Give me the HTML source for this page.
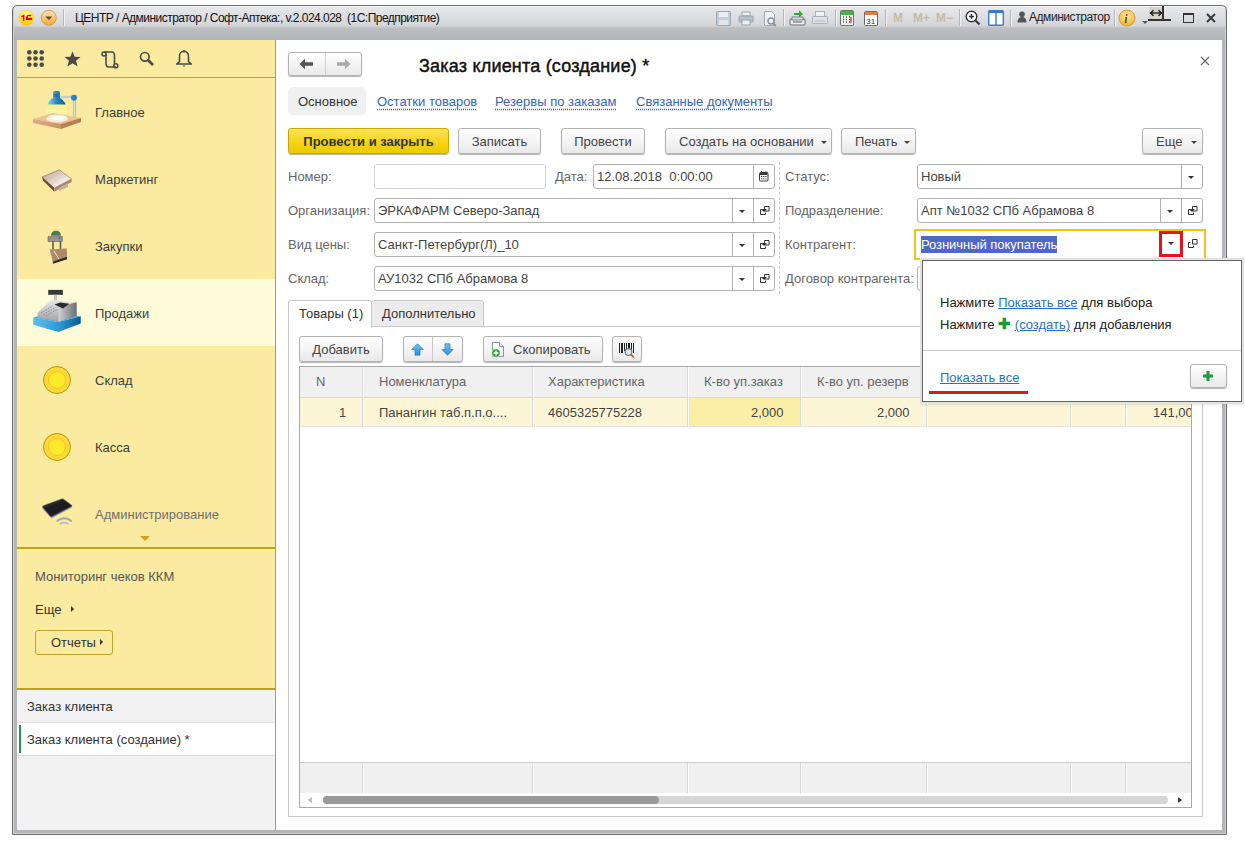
<!DOCTYPE html>
<html><head><meta charset="utf-8">
<style>
*{box-sizing:border-box;margin:0;padding:0}
html,body{width:1245px;height:843px;overflow:hidden;background:#fff;-webkit-font-smoothing:antialiased;font-family:"Liberation Sans",sans-serif;font-size:13px;color:#3d3d3d}
.a{position:absolute}
.t{position:absolute;white-space:nowrap;line-height:15px}
#win{position:absolute;left:12px;top:5px;width:1215px;height:830px;border:1px solid #6f6f6f;border-radius:5px 5px 0 0;box-shadow:inset 1px 0 0 #cfd0d2,inset -1px 0 0 #cfd0d2,inset 0 -1px 0 #cfd0d2,inset 0 1px 0 #f4f4f6;background:linear-gradient(#e8e9eb,#d4d5d8 20px,#c6c7ca 21px,#bdbec1 22px,#b4b5b8 34px)}
#left{position:absolute;left:17px;top:40px;width:259px;height:790px;background:#fbeba0}
#form{position:absolute;left:276px;top:40px;width:946px;height:790px;background:#fff}
.sep{position:absolute;top:9px;width:1px;height:17px;background:#b5b6b9;box-shadow:1px 0 0 #f2f2f2}
.btn{position:absolute;border:1px solid #b3b3b3;border-radius:3px;background:linear-gradient(#fff,#f4f4f4 50%,#e9e9e9);box-shadow:0 1px 1px rgba(0,0,0,.3);text-align:center;line-height:23px;color:#444;white-space:nowrap}
.inp{position:absolute;border:1px solid #b0b0b0;border-radius:3px;background:#fff;height:25px;line-height:23px;padding-left:3px;color:#444;white-space:nowrap}
.dd{position:absolute;top:0;bottom:0;width:20px;border-left:1px solid #b0b0b0}
.dd:after{content:"";position:absolute;left:7px;top:10px;border-left:3px solid transparent;border-right:3px solid transparent;border-top:3px solid #333}
.op{position:absolute;width:18px;height:25px}
.lnk{color:#3366bb;text-decoration:underline dotted #3366bb;text-underline-offset:3px}
.lab{color:#666}
.navt{position:absolute;left:78px;color:#333;font-size:13px}

.ar{width:21px}
.ar:after{content:"";position:absolute;left:6px;top:11px;border-left:3px solid transparent;border-right:3px solid transparent;border-top:3px solid #333}
.op2:after{content:"";position:absolute;left:8px;top:7px;width:6px;height:6px;border:1px solid #333}
.op2:before{content:"";position:absolute;left:5px;top:10px;width:5px;height:5px;border-left:1px solid #333;border-bottom:1px solid #333}
.dd:not(.ar):not(.op2):after{}
</style></head><body>
<div id="win"></div>
<!-- title bar -->
<svg class="a" style="left:17px;top:9px" width="19" height="18" viewBox="0 0 19 18">
 <defs><radialGradient id="g1c" cx="50%" cy="30%" r="65%"><stop offset="0" stop-color="#fffac0"/><stop offset=".6" stop-color="#ffe830"/><stop offset="1" stop-color="#f5c800"/></radialGradient></defs>
 <circle cx="9.3" cy="8.8" r="7.6" fill="url(#g1c)" stroke="#f0d060" stroke-width=".6"/>
 <path d="M4.2 7.2l2-1.4h1.2v6.2H5.8V7.8l-1.2.6z" fill="#e80000"/>
 <path d="M9 9.5c0-2.6 1.3-3.7 3.3-3.7 1.2 0 2 .5 2.3 1.2l-1.3.6c-.2-.3-.5-.5-1-.5-.9 0-1.4.6-1.5 2H15.2v1.8H9z" fill="#e80000"/>
</svg>
<svg class="a" style="left:39px;top:9px" width="19" height="18" viewBox="0 0 19 18">
 <defs><linearGradient id="gor" x1="0" y1="0" x2="0" y2="1"><stop offset="0" stop-color="#fde6b8"/><stop offset="1" stop-color="#f7a830"/></linearGradient></defs>
 <circle cx="9.8" cy="8.8" r="7.5" fill="url(#gor)" stroke="#c89a40" stroke-width=".9"/>
 <path d="M6.3 7.5h7l-3.5 3.6z" fill="#5a4828"/>
</svg>
<div class="sep" style="left:63px"></div>
<div class="t" style="left:75px;top:11px;font-size:12px;color:#111;letter-spacing:-0.53px;white-space:pre">ЦЕНТР / Администратор / Софт-Аптека:, v.2.024.028  (1С:Предприятие)</div>


<!-- title toolbar right -->
<svg class="a" style="left:716px;top:11px" width="15" height="15" viewBox="0 0 15 15"><rect x=".5" y=".5" width="14" height="14" rx="1" fill="#c4cdd6" stroke="#9aa6b2"/><rect x="3" y="1" width="9" height="5" fill="#e8eef3"/><rect x="3" y="9" width="9" height="5" fill="#dfe5ea"/></svg>
<svg class="a" style="left:738px;top:11px" width="16" height="15" viewBox="0 0 16 15"><rect x="4" y="1" width="8" height="4" fill="#eceff2" stroke="#9aa4ae"/><rect x="1" y="5" width="14" height="6" rx="1" fill="#b9c2cb" stroke="#98a2ac"/><rect x="4" y="9" width="8" height="5" fill="#eceff2" stroke="#9aa4ae"/></svg>
<svg class="a" style="left:763px;top:11px" width="15" height="16" viewBox="0 0 15 16"><path d="M1.5 .5h7l3 3v11h-10z" fill="#eef1f4" stroke="#9ea8b2"/><circle cx="8" cy="10" r="3" fill="none" stroke="#8a96a2" stroke-width="1.5"/><path d="M10 12l3 3" stroke="#8a96a2" stroke-width="1.8"/></svg>
<div class="sep" style="left:783px"></div>
<svg class="a" style="left:789px;top:9px" width="17" height="17" viewBox="0 0 17 17"><path d="M5 4h5V1.5L14 5l-4 3.5V6H5z" fill="#2bb02b"/><rect x="1" y="10" width="15" height="6" rx="1" fill="#eee" stroke="#6a6a6a"/><rect x="3" y="8" width="11" height="3" fill="#ddd" stroke="#6a6a6a" stroke-width=".8"/><path d="M4 13h9" stroke="#555"/></svg>
<svg class="a" style="left:812px;top:11px" width="16" height="15" viewBox="0 0 16 15"><rect x="3.5" y=".5" width="9" height="5" fill="#eef0f2" stroke="#a8b0b8"/><rect x=".5" y="5.5" width="15" height="7" rx="1" fill="#dde1e5" stroke="#a8b0b8"/><path d="M3 10h10" stroke="#b0b8c0"/></svg>
<div class="sep" style="left:835px"></div>
<svg class="a" style="left:840px;top:10px" width="14" height="16" viewBox="0 0 14 16"><rect x=".5" y=".5" width="13" height="15" rx="1" fill="#eef2ee" stroke="#6a7a6a"/><rect x="1" y="1" width="12" height="4" fill="#4ab04a"/><path d="M3 7h1M6 7h1M9 7h1M3 9.5h1M6 9.5h1M9 9.5h1M3 12h1M6 12h1M9 12h1" stroke="#555" stroke-width="1.3"/><path d="M11 7v6" stroke="#d03030" stroke-width="1.3"/></svg>
<svg class="a" style="left:864px;top:10px" width="14" height="16" viewBox="0 0 14 16"><rect x=".5" y="1.5" width="13" height="14" rx="1" fill="#fff" stroke="#6a6a6a"/><rect x="1" y="2" width="12" height="3" fill="#e08040"/><text x="2.3" y="13.5" font-family="Liberation Sans" font-size="8" fill="#333">31</text></svg>
<div class="sep" style="left:885px"></div>
<div class="t" style="left:893px;top:11px;font-size:12px;font-weight:bold;color:#c9b9a6">M</div>
<div class="t" style="left:913px;top:11px;font-size:12px;font-weight:bold;color:#c9b9a6">M+</div>
<div class="t" style="left:936px;top:11px;font-size:12px;font-weight:bold;color:#c9b9a6">M−</div>
<div class="sep" style="left:959px"></div>
<svg class="a" style="left:965px;top:10px" width="16" height="16" viewBox="0 0 16 16"><circle cx="6.5" cy="6.5" r="5.3" fill="#fff" stroke="#333" stroke-width="1.4"/><path d="M6.5 4v5M4 6.5h5" stroke="#333" stroke-width="1.4"/><path d="M10.5 10.5l4 4" stroke="#333" stroke-width="2"/></svg>
<svg class="a" style="left:988px;top:10px" width="16" height="16" viewBox="0 0 16 16"><rect x=".7" y=".7" width="14.6" height="14.6" rx="1" fill="#fff" stroke="#3a7ac8" stroke-width="1.4"/><rect x="1" y="1" width="14" height="2" fill="#3a7ac8"/><path d="M8 2v13" stroke="#3a7ac8" stroke-width="1.4"/></svg>
<div class="sep" style="left:1010px"></div>
<svg class="a" style="left:1017px;top:11px" width="10" height="12" viewBox="0 0 10 12"><circle cx="5" cy="3.2" r="2.8" fill="#555"/><path d="M0.5 11.5c0-4 2-5.5 4.5-5.5s4.5 1.5 4.5 5.5z" fill="#555"/></svg>
<div class="t" style="left:1029px;top:10px;font-size:12px;color:#222;letter-spacing:-0.45px">Администратор</div>
<div class="sep" style="left:1114px"></div>
<svg class="a" style="left:1118px;top:9px" width="18" height="18" viewBox="0 0 18 18"><defs><radialGradient id="ginf" cx="50%" cy="35%" r="60%"><stop offset="0" stop-color="#fde7a8"/><stop offset="1" stop-color="#f2b838"/></radialGradient></defs><circle cx="9" cy="9" r="8" fill="url(#ginf)" stroke="#d8a030"/><text x="6.3" y="14" font-family="Liberation Serif" font-style="italic" font-weight="bold" font-size="12" fill="#6a5020">i</text></svg>
<div class="a" style="left:1149px;top:7px;width:14px;height:12px;background:#d6d2ca"></div>
<svg class="a" style="left:1149px;top:9px" width="14" height="8" viewBox="0 0 14 8"><path d="M2 4h10" stroke="#111" stroke-width="1.3"/><path d="M4.5 1.2L1.5 4l3 2.8M9.5 1.2l3 2.8-3 2.8" fill="none" stroke="#111" stroke-width="1.3"/></svg>
<div class="a" style="left:1162px;top:6px;width:2px;height:15px;background:#333"></div>
<div class="a" style="left:1148px;top:19px;width:23px;height:2px;background:#333"></div>
<div class="a" style="left:1142px;top:21px;border-left:3px solid transparent;border-right:3px solid transparent;border-top:3px solid #555"></div>
<div class="a" style="left:1183px;top:13px;width:11px;height:10px;border:1px solid #333;border-top-width:2px"></div>
<svg class="a" style="left:1206px;top:13px" width="10" height="10" viewBox="0 0 10 10"><path d="M1 1l8 8M9 1l-8 8" stroke="#333" stroke-width="1.8"/></svg>
<div id="left"></div>
<!-- left panel -->
<svg class="a" style="left:27px;top:50px" width="18" height="18" viewBox="0 0 18 18" fill="#4a4a4a">
 <circle cx="2.3" cy="2.3" r="2.3"/><circle cx="8.5" cy="2.3" r="2.3"/><circle cx="14.7" cy="2.3" r="2.3"/>
 <circle cx="2.3" cy="8.5" r="2.3"/><circle cx="8.5" cy="8.5" r="2.3"/><circle cx="14.7" cy="8.5" r="2.3"/>
 <circle cx="2.3" cy="14.7" r="2.3"/><circle cx="8.5" cy="14.7" r="2.3"/><circle cx="14.7" cy="14.7" r="2.3"/>
</svg>
<svg class="a" style="left:64px;top:51px" width="17" height="16" viewBox="0 0 17 16"><path d="M8.5 0.5l2.2 5.3 5.8 .3-4.5 3.7 1.6 5.7-5.1-3.3-5.1 3.3 1.6-5.7L.5 6.1l5.8-.3z" fill="#4a4a4a"/></svg>
<svg class="a" style="left:101px;top:51px" width="18" height="18" viewBox="0 0 18 18" fill="none" stroke="#4a4a4a" stroke-width="1.6">
 <circle cx="3" cy="3" r="2"/><path d="M3 1h8c2 0 2.5 2 2.5 4v8"/><path d="M5 3v9c0 2 .5 4 2.5 4h7.5"/><circle cx="14.8" cy="14.8" r="2"/>
</svg>
<svg class="a" style="left:139px;top:51px" width="16" height="16" viewBox="0 0 16 16"><circle cx="5.8" cy="5.8" r="4.3" fill="none" stroke="#4a4a4a" stroke-width="1.7"/><path d="M9 9l5 5" stroke="#4a4a4a" stroke-width="2.6"/></svg>
<svg class="a" style="left:176px;top:50px" width="16" height="18" viewBox="0 0 16 18"><path d="M8 1.2c-2.8 0-4.5 2.2-4.5 5v5.3L1 14h14l-2.5-2.5V6.2c0-2.8-1.7-5-4.5-5z" fill="none" stroke="#4a4a4a" stroke-width="1.6"/><circle cx="8" cy="1.3" r="1.2" fill="#4a4a4a"/><path d="M6.5 15.5h3l-1.5 1.5z" fill="#4a4a4a"/></svg>
<div class="a" style="left:17px;top:77px;width:258px;height:1px;background:#bda21c"></div>
<div class="a" style="left:17px;top:279px;width:258px;height:67px;background:#fefbd8"></div>
<div class="t" style="left:95px;top:105px">Главное</div>
<div class="t" style="left:95px;top:172px">Маркетинг</div>
<div class="t" style="left:95px;top:239px">Закупки</div>
<div class="t" style="left:95px;top:306px">Продажи</div>
<div class="t" style="left:95px;top:373px">Склад</div>
<div class="t" style="left:95px;top:440px">Касса</div>
<div class="t" style="left:95px;top:507px;color:#707070">Администрирование</div>
<div class="a" style="left:140px;top:536px;border-left:5px solid transparent;border-right:5px solid transparent;border-top:5px solid #d4a020"></div>
<!-- icons -->
<svg class="a" style="left:25px;top:85px" width="65" height="55" viewBox="0 0 65 55">
 <defs>
  <linearGradient id="lshade" x1="0" y1="0" x2="1" y2="0"><stop offset="0" stop-color="#9ad4f4"/><stop offset=".5" stop-color="#2a86c0"/><stop offset="1" stop-color="#1a5a90"/></linearGradient>
  <linearGradient id="lcone" x1="0" y1="0" x2="0" y2="1"><stop offset="0" stop-color="#fff27a" stop-opacity=".95"/><stop offset="1" stop-color="#fff8c0" stop-opacity=".4"/></linearGradient>
  <linearGradient id="lfront" x1="0" y1="0" x2="1" y2="0"><stop offset="0" stop-color="#e0a888"/><stop offset="1" stop-color="#c89468"/></linearGradient>
 </defs>
 <path d="M23 19.6L20 29h23l-3-9.4z" fill="url(#lcone)"/>
 <path d="M8 34L28 28L56 33L36 39z" fill="#e6c494"/>
 <path d="M8 34L36 39V44L8 38z" fill="url(#lfront)"/>
 <path d="M36 39L56 33V37L36 44z" fill="#b48058"/>
 <ellipse cx="32" cy="33.5" rx="11" ry="4" fill="#fff8d8" opacity=".8"/>
 <path d="M23 34L29 30.7L42.4 32L35.6 35.6z" fill="#fff"/>
 <path d="M35 12h14" stroke="#c8ccd2" stroke-width="2.4"/>
 <path d="M49.6 13v18.5" stroke="#a8acb2" stroke-width="2.6"/>
 <path d="M49.6 13v18.5" stroke="#e8eaee" stroke-width="1"/>
 <circle cx="49" cy="12.7" r="3" fill="#2a80c0"/>
 <path d="M28 13V7.5c0-1 1-1.5 3.5-1.5s3.5 .5 3.5 1.5V13c2 1 5 4 5.5 6.6H22.5C23 17 26 14 28 13z" fill="url(#lshade)"/>
 <path d="M30 9v3M32 9v3" stroke="#1a4a78" stroke-width=".8"/>
</svg>
<svg class="a" style="left:30px;top:155px" width="55" height="45" viewBox="0 0 55 45">
 <defs><linearGradient id="mtop" x1="0" y1="0" x2="1" y2="1"><stop offset="0" stop-color="#b89a88"/><stop offset=".7" stop-color="#f4ece8"/><stop offset="1" stop-color="#c8b0a0"/></linearGradient></defs>
 <path d="M12 22l17.4-7.2L41.6 24L24.3 33.1z" fill="url(#mtop)" stroke="#8a6a58" stroke-width=".6"/>
 <path d="M12 22L24.3 33.1V36.8L13 25.5z" fill="#6a4a38"/>
 <path d="M24.3 33.1L41.6 24V27L24.3 36.8z" fill="#a88870"/>
 <path d="M29 33l9-5v4l-9 4z" fill="#c8b098"/>
</svg>
<svg class="a" style="left:35px;top:220px" width="45" height="55" viewBox="0 0 45 55">
 <path d="M16 15.7c0-3 2-5 5-5s5 2 5 5z" fill="#6a6a62"/>
 <rect x="17.5" y="12.5" width="7" height="2" fill="#2a8a5a"/>
 <path d="M13 16.6h14.4v4.9H13z" fill="#9a968e" stroke="#5a5650" stroke-width=".6"/>
 <path d="M23 18.5l1.5-1.5 1.5 1.5z" fill="#3050c0"/>
 <path d="M18 21.5v8M25.5 21.5v8" stroke="#5a5a5a" stroke-width="1.6"/>
 <path d="M14.7 29.5l17 -1 .3 8.5-14 5z" fill="#b08a68"/>
 <path d="M17.7 41.7l14.3-5v2.5l-14 4.5z" fill="#2a2420"/>
 <path d="M19 31l5 8" stroke="#f0e8e0" stroke-width="1"/>
</svg>
<svg class="a" style="left:25px;top:285px" width="65" height="55" viewBox="0 0 65 55">
 <defs>
  <linearGradient id="dr" x1="0" y1="0" x2="1" y2="0"><stop offset="0" stop-color="#5cc0ee"/><stop offset=".55" stop-color="#2a98d8"/><stop offset="1" stop-color="#0a5a90"/></linearGradient>
  <linearGradient id="kb" x1="0" y1="0" x2="0" y2="1"><stop offset="0" stop-color="#e8e8ea"/><stop offset="1" stop-color="#a0a2a6"/></linearGradient>
  <linearGradient id="side" x1="0" y1="0" x2="1" y2="0"><stop offset="0" stop-color="#d0d2d4"/><stop offset="1" stop-color="#6a6c70"/></linearGradient>
 </defs>
 <path d="M8.2 32.6V39.8L33.3 47L55.8 38.5V31.3L33 37z" fill="url(#dr)"/>
 <path d="M8.2 32.6L30 27L55.8 31.3L33 37z" fill="#3aa8e0"/>
 <path d="M12.4 28L26 15L51.6 17.3V30.7L33.3 36.6L12.4 32.6z" fill="url(#kb)"/>
 <path d="M34 22L51.6 17.3V30.7L33.3 36.6z" fill="url(#side)"/>
 <path d="M29.4 19.5L35 17.5L44.4 18.8L38 23.5z" fill="#2a2a2a"/>
 <path d="M16 28l12-7M18.5 29.5l12-7M21 31l12-7" stroke="#8a8c90" stroke-width="1" stroke-dasharray="1.5 1.2"/>
 <rect x="23.2" y="4.9" width="14.7" height="4.9" fill="#3a3a3a"/>
 <rect x="29" y="9.8" width="3" height="5.5" fill="#c8c8c8"/>
 <circle cx="19.5" cy="38" r=".8" fill="#c0a0a0"/>
</svg>
<svg class="a" style="left:35px;top:360px" width="45" height="40" viewBox="0 0 45 40"><circle cx="22" cy="20" r="13.5" fill="#fdd838" stroke="#b89a10" stroke-width="1"/><circle cx="22" cy="20" r="8.5" fill="#ffea2a" stroke="#ecc828" stroke-width="1"/></svg>
<svg class="a" style="left:35px;top:427px" width="45" height="40" viewBox="0 0 45 40"><circle cx="22" cy="20" r="13.5" fill="#fdd838" stroke="#b89a10" stroke-width="1"/><circle cx="22" cy="20" r="8.5" fill="#ffea2a" stroke="#ecc828" stroke-width="1"/></svg>
<svg class="a" style="left:30px;top:490px" width="55" height="45" viewBox="0 0 55 45">
 <path d="M13 19.5L21.5 28.5L42 17.5L41.5 15.8L21.1 26.3L12.6 17.6z" fill="#a8a8b0"/>
 <path d="M12.8 17.3Q12.3 16.2 13.5 15.7L31.8 9Q32.8 8.7 33.5 9.3L41.6 15.2Q42.3 16 41.2 16.6L22 26.6Q21 27 20.3 26.3z" fill="#1c1c22" stroke="#55555c" stroke-width=".7"/>
 <path d="M15 17l17-6" stroke="#3a3a44" stroke-width=".6"/>
 <path d="M27.5 30.8q6.8-5.2 13.6 0" stroke="#9aa2bc" stroke-width="2" fill="none" stroke-linecap="round"/>
 <path d="M30.6 33.8q3.6-2.6 7.2 0" stroke="#b4b8c4" stroke-width="1.7" fill="none" stroke-linecap="round"/>
</svg>
<div class="a" style="left:17px;top:547px;width:258px;height:2px;background:#bda21c"></div>
<div class="t" style="left:35px;top:569px;color:#555">Мониторинг чеков ККМ</div>
<div class="t" style="left:35px;top:602px;color:#333">Еще</div>
<div class="a" style="left:71px;top:606px;border-top:3px solid transparent;border-bottom:3px solid transparent;border-left:3px solid #333"></div>
<div class="a" style="left:35px;top:630px;width:78px;height:25px;border:1px solid #bfa425;border-radius:3px"></div>
<div class="t" style="left:51px;top:635px;color:#333">Отчеты</div>
<div class="a" style="left:100px;top:639px;border-top:3px solid transparent;border-bottom:3px solid transparent;border-left:3px solid #333"></div>
<div class="a" style="left:17px;top:688px;width:258px;height:142px;background:#f2f2f2;border-top:2px solid #bda21c"></div>
<div class="t" style="left:27px;top:699px;color:#333">Заказ клиента</div>
<div class="a" style="left:17px;top:722px;width:258px;height:34px;background:#fff;border-top:1px solid #e0e0e0;border-bottom:1px solid #dcdcdc"></div>
<div class="a" style="left:19px;top:725px;width:2px;height:28px;background:#1e9a50"></div>
<div class="t" style="left:27px;top:732px;color:#333">Заказ клиента (создание) *</div>
<div class="a" style="left:275px;top:40px;width:1px;height:790px;background:#bda21c"></div>

<div id="form"></div>
<!-- form header -->
<div class="btn" style="left:288px;top:52px;width:74px;height:24px;border-radius:3px"></div>
<div class="a" style="left:325px;top:53px;width:1px;height:22px;background:#d0d0d0"></div>
<svg class="a" style="left:299px;top:58px" width="16" height="12" viewBox="0 0 16 12"><path d="M0.5 6L6 0.8v3.4h8v3.6H6v3.4z" fill="#555"/></svg>
<svg class="a" style="left:335px;top:58px" width="16" height="12" viewBox="0 0 16 12"><path d="M15.5 6L10 0.8v3.4H2v3.6h8v3.4z" fill="#aaa"/></svg>
<div class="t" style="left:419px;top:56px;font-size:18px;line-height:20px;color:#111;letter-spacing:.2px;-webkit-text-stroke:.45px #111">Заказ клиента (создание) *</div>
<svg class="a" style="left:1200px;top:56px" width="10" height="10" viewBox="0 0 10 10"><path d="M1 1l8 8M9 1l-8 8" stroke="#666" stroke-width="1.2"/></svg>
<div class="a" style="left:288px;top:87px;width:78px;height:28px;background:#f0f0f0;border-radius:5px"></div>
<div class="t" style="left:298px;top:94px;color:#333">Основное</div>
<div class="t lnk" style="left:377px;top:94px">Остатки товаров</div>
<div class="t lnk" style="left:495px;top:94px">Резервы по заказам</div>
<div class="t lnk" style="left:636px;top:94px">Связанные документы</div>
<!-- command bar -->
<div class="btn" style="left:288px;top:128px;width:161px;height:26px;background:linear-gradient(#fbe35a,#f5d311 60%,#eccb00);border-color:#c9a800;font-weight:bold;color:#333;line-height:26px">Провести и закрыть</div>
<div class="btn" style="left:458px;top:128px;width:83px;height:26px;line-height:26px">Записать</div>
<div class="btn" style="left:561px;top:128px;width:84px;height:26px;line-height:26px">Провести</div>
<div class="btn" style="left:665px;top:128px;width:167px;height:26px;line-height:26px;text-align:left;padding-left:13px">Создать на основании</div>
<div class="btn" style="left:841px;top:128px;width:75px;height:26px;line-height:26px;text-align:left;padding-left:13px">Печать</div>
<div class="btn" style="left:1142px;top:128px;width:61px;height:26px;line-height:26px;text-align:left;padding-left:13px">Еще</div>
<div class="a" style="left:821px;top:141px;border-left:3px solid transparent;border-right:3px solid transparent;border-top:3px solid #444"></div>
<div class="a" style="left:904px;top:141px;border-left:3px solid transparent;border-right:3px solid transparent;border-top:3px solid #444"></div>
<div class="a" style="left:1191px;top:141px;border-left:3px solid transparent;border-right:3px solid transparent;border-top:3px solid #444"></div>
<!-- fields -->
<div class="t lab" style="left:288px;top:169px">Номер:</div>
<div class="inp" style="left:374px;top:164px;width:172px;border-color:#d4d4d4"></div>
<div class="t lab" style="left:555px;top:169px">Дата:</div>
<div class="inp" style="left:593px;top:164px;width:182px;height:25px;line-height:23px"><span style="white-space:pre">12.08.2018  0:00:00</span><div class="dd" style="right:0;width:21px"></div></div>
<svg class="a" style="left:759px;top:170px" width="11" height="12" viewBox="0 0 11 12"><rect x=".5" y="2.5" width="8.5" height="8.5" rx="1" fill="#fff" stroke="#3a3a3a" stroke-width="1"/><rect x="1" y="2.5" width="7.5" height="2.5" fill="#3a3a3a"/><path d="M2.5 1v2M7 1v2" stroke="#3a3a3a" stroke-width="1"/><path d="M2 6.5h1.3M4.1 6.5h1.3M6.2 6.5h1.3M2 8.8h1.3M4.1 8.8h1.3M6.2 8.8h1.3" stroke="#3a3a3a" stroke-width="1"/></svg>
<div class="t lab" style="left:288px;top:203px">Организация:</div>
<div class="inp" style="left:374px;top:198px;width:401px">ЭРКАФАРМ Северо-Запад<div class="dd ar" style="right:21px"></div><div class="dd" style="right:0;width:21px"><svg style="position:absolute;left:5px;top:7px" width="11" height="11" viewBox="0 0 11 11"><path d="M5.5 .5h4.5v4.5h-4.5z" fill="none" stroke="#333" stroke-width="1"/><path d="M3.5 3.5h-2v5h5v-2" fill="none" stroke="#333" stroke-width="1"/></svg></div></div>
<div class="t lab" style="left:288px;top:237px">Вид цены:</div>
<div class="inp" style="left:374px;top:232px;width:401px">Санкт-Петербург(Л)_10<div class="dd ar" style="right:21px"></div><div class="dd" style="right:0;width:21px"><svg style="position:absolute;left:5px;top:7px" width="11" height="11" viewBox="0 0 11 11"><path d="M5.5 .5h4.5v4.5h-4.5z" fill="none" stroke="#333" stroke-width="1"/><path d="M3.5 3.5h-2v5h5v-2" fill="none" stroke="#333" stroke-width="1"/></svg></div></div>
<div class="t lab" style="left:288px;top:271px">Склад:</div>
<div class="inp" style="left:374px;top:266px;width:401px">АУ1032 СПб Абрамова 8<div class="dd ar" style="right:21px"></div><div class="dd" style="right:0;width:21px"><svg style="position:absolute;left:5px;top:7px" width="11" height="11" viewBox="0 0 11 11"><path d="M5.5 .5h4.5v4.5h-4.5z" fill="none" stroke="#333" stroke-width="1"/><path d="M3.5 3.5h-2v5h5v-2" fill="none" stroke="#333" stroke-width="1"/></svg></div></div>
<div class="a" style="left:779px;top:162px;width:0;height:132px;border-left:1px dashed #d0d0d0"></div>
<div class="t lab" style="left:785px;top:169px">Статус:</div>
<div class="inp" style="left:917px;top:164px;width:286px">Новый<div class="dd ar" style="right:0;width:21px"></div></div>
<div class="t lab" style="left:785px;top:203px">Подразделение:</div>
<div class="inp" style="left:917px;top:198px;width:286px">Апт №1032 СПб Абрамова 8<div class="dd ar" style="right:21px"></div><div class="dd" style="right:0;width:21px"><svg style="position:absolute;left:5px;top:7px" width="11" height="11" viewBox="0 0 11 11"><path d="M5.5 .5h4.5v4.5h-4.5z" fill="none" stroke="#333" stroke-width="1"/><path d="M3.5 3.5h-2v5h5v-2" fill="none" stroke="#333" stroke-width="1"/></svg></div></div>
<div class="t lab" style="left:785px;top:237px">Контрагент:</div>
<div class="a" style="left:914px;top:229px;width:292px;height:31px;border:2px solid #f6c21a"></div>
<div class="t" style="left:921px;top:236px;color:#fff;background:#4f68c2;line-height:16px;padding-top:1px;letter-spacing:-0.05px">Розничный покупатель</div>
<div class="a" style="left:1159px;top:231px;width:24px;height:26px;border:3px solid #e2141e"></div>
<div class="a" style="left:1168px;top:242px;border-left:3px solid transparent;border-right:3px solid transparent;border-top:3px solid #333"></div>
<svg class="a" style="left:1187px;top:239px" width="11" height="11" viewBox="0 0 11 11"><path d="M5.5 .5h4.5v4.5h-4.5z" fill="none" stroke="#333" stroke-width="1"/><path d="M3.5 3.5h-2v5h5v-2" fill="none" stroke="#333" stroke-width="1"/></svg>
<div class="t lab" style="left:785px;top:271px">Договор контрагента:</div>
<div class="inp" style="left:917px;top:266px;width:286px"></div>
<!-- tabs -->
<div class="a" style="left:288px;top:326px;width:915px;height:491px;border:1px solid #c8c8c8"></div>
<div class="a" style="left:371px;top:300px;width:113px;height:27px;background:#ececec;border:1px solid #c8c8c8;border-radius:3px 3px 0 0"></div>
<div class="a" style="left:288px;top:300px;width:84px;height:28px;background:#fff;border:1px solid #c8c8c8;border-bottom:none;border-radius:3px 3px 0 0"></div>
<div class="t" style="left:299px;top:306px;color:#333">Товары (1)</div>
<div class="t" style="left:382px;top:306px;color:#333">Дополнительно</div>
<!-- table toolbar -->
<div class="btn" style="left:299px;top:336px;width:84px;height:26px;line-height:25px">Добавить</div>
<div class="btn" style="left:403px;top:336px;width:60px;height:26px"></div>
<div class="a" style="left:432px;top:337px;width:1px;height:24px;background:#c8c8c8"></div>
<svg class="a" style="left:411px;top:343px" width="13" height="13" viewBox="0 0 13 13"><defs><linearGradient id="arg" x1="0" y1="0" x2="0" y2="1"><stop offset="0" stop-color="#6cc4f4"/><stop offset="1" stop-color="#2a90d8"/></linearGradient></defs><path d="M6.5 .8L12.2 6.5H9v5.7H4V6.5H.8z" fill="url(#arg)" stroke="#2a7cc0" stroke-width=".7" stroke-linejoin="round"/></svg>
<svg class="a" style="left:441px;top:343px" width="13" height="13" viewBox="0 0 13 13"><path d="M6.5 12.2L12.2 6.5H9V.8H4v5.7H.8z" fill="url(#arg)" stroke="#2a7cc0" stroke-width=".7" stroke-linejoin="round"/></svg>
<div class="btn" style="left:483px;top:336px;width:120px;height:26px;line-height:25px;text-align:left;padding-left:29px">Скопировать</div>
<svg class="a" style="left:490px;top:341px" width="16" height="17" viewBox="0 0 16 17"><path d="M2.5 1.5h7l4 4v10h-11z" fill="#fafafa" stroke="#8a96a2" stroke-width="1"/><path d="M9.5 1.5v4h4" fill="#e8eef4" stroke="#8a96a2" stroke-width="1"/><circle cx="6" cy="12" r="4.2" fill="#25a03a" stroke="#fff" stroke-width=".6"/><path d="M6 9.6v4.8M3.6 12h4.8" stroke="#fff" stroke-width="1.4"/></svg>
<div class="btn" style="left:612px;top:336px;width:30px;height:26px"></div>
<svg class="a" style="left:619px;top:342px" width="17" height="16" viewBox="0 0 17 16"><g fill="#222"><rect x="0" y="1" width="1" height="10"/><rect x="2" y="1" width="2" height="10"/><rect x="5" y="1" width="1" height="8"/><rect x="7" y="1" width="1" height="7"/><rect x="9" y="1" width="2" height="6"/><rect x="12" y="1" width="1" height="7"/><rect x="14" y="1" width="1" height="10"/></g><circle cx="9.5" cy="10" r="3.3" fill="#d8ecf8" stroke="#7a7a7a" stroke-width="1.2"/><path d="M11.8 12.3l3 3" stroke="#a06a30" stroke-width="1.8"/></svg>
<!-- table -->
<div class="a" style="left:299px;top:366px;width:893px;height:442px;border:1px solid #a8a8a8;background:#fff"></div>
<div class="a" style="left:300px;top:367px;width:891px;height:31px;background:#f0f0f0;border-bottom:1px solid #dadada"></div>
<div class="a" style="left:300px;top:398px;width:891px;height:29px;background:#fcf6d6;border-bottom:1px solid #e2e2e2"></div>
<div class="a" style="left:688px;top:398px;width:112px;height:28px;background:#fbeea6"></div>
<div class="a" style="left:300px;top:762px;width:891px;height:31px;background:#f0f0f0;border-top:1px solid #cfcfcf"></div>
<div class="a" style="left:300px;top:793px;width:891px;height:14px;background:#fff"></div>
<div class="a" style="left:323px;top:796px;width:845px;height:8px;background:#d6d6d6;border-radius:4px"></div>
<div class="a" style="left:323px;top:796px;width:336px;height:8px;background:#9a9a9a;border-radius:4px"></div>
<div class="a" style="left:308px;top:797px;border-top:3px solid transparent;border-bottom:3px solid transparent;border-right:4px solid #bbb"></div>
<div class="a" style="left:1178px;top:797px;border-top:3px solid transparent;border-bottom:3px solid transparent;border-left:4px solid #333"></div>
<div class="a" style="left:362px;top:367px;width:2px;height:60px;border-left:1px solid #dcdcdc;border-right:1px solid #fff"></div>
<div class="a" style="left:362px;top:763px;width:2px;height:30px;border-left:1px solid #d8d8d8;border-right:1px solid #fff"></div>
<div class="a" style="left:532px;top:367px;width:2px;height:60px;border-left:1px solid #dcdcdc;border-right:1px solid #fff"></div>
<div class="a" style="left:532px;top:763px;width:2px;height:30px;border-left:1px solid #d8d8d8;border-right:1px solid #fff"></div>
<div class="a" style="left:687px;top:367px;width:2px;height:60px;border-left:1px solid #dcdcdc;border-right:1px solid #fff"></div>
<div class="a" style="left:687px;top:763px;width:2px;height:30px;border-left:1px solid #d8d8d8;border-right:1px solid #fff"></div>
<div class="a" style="left:800px;top:367px;width:2px;height:60px;border-left:1px solid #dcdcdc;border-right:1px solid #fff"></div>
<div class="a" style="left:800px;top:763px;width:2px;height:30px;border-left:1px solid #d8d8d8;border-right:1px solid #fff"></div>
<div class="a" style="left:926px;top:367px;width:2px;height:60px;border-left:1px solid #dcdcdc;border-right:1px solid #fff"></div>
<div class="a" style="left:926px;top:763px;width:2px;height:30px;border-left:1px solid #d8d8d8;border-right:1px solid #fff"></div>
<div class="a" style="left:1070px;top:367px;width:2px;height:60px;border-left:1px solid #dcdcdc;border-right:1px solid #fff"></div>
<div class="a" style="left:1070px;top:763px;width:2px;height:30px;border-left:1px solid #d8d8d8;border-right:1px solid #fff"></div>
<div class="a" style="left:1125px;top:367px;width:2px;height:60px;border-left:1px solid #dcdcdc;border-right:1px solid #fff"></div>
<div class="a" style="left:1125px;top:763px;width:2px;height:30px;border-left:1px solid #d8d8d8;border-right:1px solid #fff"></div>

<div class="t" style="left:316px;top:374px;color:#666">N</div>
<div class="t" style="left:379px;top:374px;color:#666">Номенклатура</div>
<div class="t" style="left:548px;top:374px;color:#666">Характеристика</div>
<div class="t" style="left:704px;top:374px;color:#666">К-во уп.заказ</div>
<div class="t" style="left:817px;top:374px;color:#666">К-во уп. резерв</div>
<div class="t" style="left:339px;top:405px;color:#444">1</div>
<div class="t" style="left:379px;top:405px;color:#444">Панангин таб.п.п.о....</div>
<div class="t" style="left:548px;top:405px;color:#444">4605325775228</div>
<div class="t" style="left:751px;top:405px;color:#444">2,000</div>
<div class="t" style="left:877px;top:405px;color:#444">2,000</div>
<div class="a" style="left:1120px;top:397px;width:71px;height:28px;overflow:hidden"><div class="t" style="left:33px;top:8px;color:#444">141,00</div></div>
<!-- popup -->
<div class="a" style="left:922px;top:260px;width:320px;height:142px;background:#fff;border:1px solid #666;box-shadow:0 0 0 2px #e2e2e2,0 3px 3px rgba(0,0,0,.1)"></div>
<div class="t" style="left:940px;top:295px;color:#222">Нажмите <span style="color:#1f74c4;text-decoration:underline">Показать все</span> для выбора</div>
<div class="t" style="left:940px;top:316px;color:#222">Нажмите <span style="color:#1e9a3a;font-weight:bold;font-size:15px">✚</span> <span style="color:#1f74c4;text-decoration:underline">(создать)</span> для добавления</div>
<div class="a" style="left:923px;top:350px;width:318px;height:1px;background:#c8c8c8"></div>
<div class="t" style="left:940px;top:370px;color:#1f74c4;text-decoration:underline">Показать все</div>
<div class="a" style="left:929px;top:391px;width:99px;height:3px;background:#e2141e"></div>
<div class="btn" style="left:1190px;top:364px;width:37px;height:24px"></div>
<svg class="a" style="left:1202px;top:370px" width="12" height="12" viewBox="0 0 12 12"><path d="M6 1v10M1 6h10" stroke="#1e9a3a" stroke-width="3"/></svg>

</body></html>
